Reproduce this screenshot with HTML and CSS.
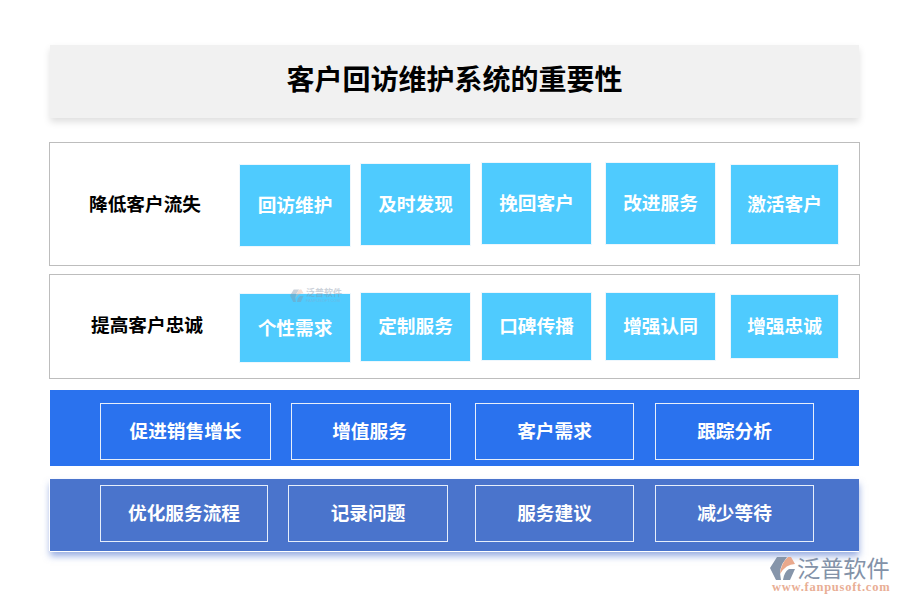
FILE: index.html
```html
<!DOCTYPE html>
<html lang="zh">
<head>
<meta charset="utf-8">
<title>客户回访维护系统的重要性</title>
<link rel="stylesheet" href="styles.css">
</head>
<body>
<main class="page">
  <h1 class="title">客户回访维护系统的重要性</h1>
  <section class="row row-a">
    <div class="label">降低客户流失</div>
    <div class="tile">回访维护</div>
    <div class="tile">及时发现</div>
    <div class="tile">挽回客户</div>
    <div class="tile">改进服务</div>
    <div class="tile">激活客户</div>
  </section>
  <section class="row row-b">
    <div class="label">提高客户忠诚</div>
    <div class="tile">个性需求</div>
    <div class="tile">定制服务</div>
    <div class="tile">口碑传播</div>
    <div class="tile">增强认同</div>
    <div class="tile">增强忠诚</div>
  </section>
  <section class="band band-a">
    <div class="cell">促进销售增长</div>
    <div class="cell">增值服务</div>
    <div class="cell">客户需求</div>
    <div class="cell">跟踪分析</div>
  </section>
  <section class="band band-b">
    <div class="cell">优化服务流程</div>
    <div class="cell">记录问题</div>
    <div class="cell">服务建议</div>
    <div class="cell">减少等待</div>
  </section>
</main>

<div class="ghost-mark">
  <svg class="ghost-icon" viewBox="0 0 26 24" aria-hidden="true">
    <path d="M7 0 L0 11 L6 23 L11 23 Q8 11 15 3 L17 0 Z" fill="#8795a8"/>
    <path d="M10 17 Q11 6 18 0 L21 0 L25 7 Q16 7 10 17 Z" fill="#e8b49c"/>
    <path d="M13 23 L20 23 L25 12 L19 12 Q14 15 13 23 Z" fill="#8795a8"/>
  </svg>
  <div class="ghost-text">
    <span class="ghost-cn">泛普软件</span>
    <span class="ghost-en">FANPUSOFT.COM</span>
  </div>
</div>

<div class="brand">
  <svg class="brand-icon" viewBox="0 0 26 24" aria-hidden="true">
    <path d="M7 0 L0 11 L6 23 L11 23 Q8 11 15 3 L17 0 Z" fill="#8695aa"/>
    <path d="M10 17 Q11 6 18 0 L21 0 L25 7 Q16 7 10 17 Z" fill="#e9a88c"/>
    <path d="M13 23 L20 23 L25 12 L19 12 Q14 15 13 23 Z" fill="#8695aa"/>
  </svg>
  <div class="brand-cn">泛普软件</div>
  <div class="brand-en">www.fanpusoft.com</div>
</div>
</body>
</html>
```

FILE: styles.css
```css
* { box-sizing: border-box; }

html, body {
  margin: 0;
  height: 600px;
  overflow: hidden;
  background: #fff;
}

body {
  position: relative;
  font-family: "Noto Sans CJK SC", "Liberation Sans", sans-serif;
}

.page {
  display: flex;
  flex-direction: column;
  padding: 45px 41px 0 50px;
}

.title {
  margin: 0;
  height: 73px;
  display: flex;
  align-items: center;
  justify-content: center;
  padding-bottom: 7px;
  background: #f1f1f1;
  box-shadow: 0 4px 7px rgba(0, 0, 0, 0.13);
  color: #000;
  font-size: 28px;
  font-weight: 700;
}

/* Outlined rows with sky-blue tiles */
.row {
  display: flex;
  align-items: flex-start;
  margin: 0 -1px;
  border: 1px solid #bdbdbd;
  background: #fff;
}

.row-a { height: 124px; margin-top: 24px; padding-top: 19px; }
.row-b { height: 105px; margin-top: 8px; padding-top: 17px; }

.label {
  width: 189px;
  align-self: center;
  text-align: center;
  color: #000;
  font-size: 18.67px;
  font-weight: 700;
  line-height: 26px;
}

.row-a .label { margin-top: -22px; padding-left: 1px; }
.row-b .label { margin-top: -23px; padding-left: 5px; }

.tile {
  display: flex;
  align-items: center;
  justify-content: center;
  width: 111px;
  border: 1px solid #eef7fd;
  background: #4fcbfe;
  color: #fff;
  font-size: 18.67px;
  font-weight: 700;
  padding-bottom: 4px;
}

.tile:nth-child(2) { width: 112px; }
.tile:nth-child(3) { margin-left: 9px; }
.tile:nth-child(4) { margin-left: 10px; }
.tile:nth-child(5) { margin-left: 13px; }
.tile:nth-child(6) { margin-left: 14px; width: 109px; }

.row-a .tile { height: 83px; }
.row-a .tile:nth-child(2) { margin-top: 2px; }
.row-a .tile:nth-child(3) { margin-top: 1px; }
.row-a .tile:nth-child(6) { margin-top: 2px; height: 81px; }

.row-b .tile { height: 69px; }
.row-b .tile:nth-child(2) { margin-top: 1px; height: 70px; }
.row-b .tile:nth-child(3) { height: 70px; padding-bottom: 6px; }
.row-b .tile:nth-child(6) { margin-top: 2px; height: 65px; }

/* Solid blue bands with outlined cells */
.band {
  display: flex;
  align-items: flex-start;
  padding-left: 50px;
}

.band-a {
  height: 76px;
  margin-top: 11px;
  padding-top: 13px;
  background: #2a72ee;
}

.band-b {
  height: 72px;
  margin-top: 13px;
  padding-top: 6px;
  background: #4a74cc;
  box-shadow: -1px 0 0 #fff, 0 1px 0 #fff, 0 5px 7px rgba(64, 104, 200, 0.55);
}

.cell {
  display: flex;
  align-items: center;
  justify-content: center;
  width: 159px;
  height: 57px;
  border: 1px solid #e6eefb;
  color: #fff;
  font-size: 18.67px;
  font-weight: 700;
  padding-bottom: 5px;
}

.band-a .cell:nth-child(1) { width: 171px; }
.band-a .cell:nth-child(2) { margin-left: 20px; width: 160px; padding-right: 3px; }
.band-a .cell:nth-child(3) { margin-left: 24px; }
.band-a .cell:nth-child(4) { margin-left: 21px; }

.band-b .cell:nth-child(1) { width: 168px; }
.band-b .cell:nth-child(2) { margin-left: 20px; width: 160px; }
.band-b .cell:nth-child(3) { margin-left: 27px; }
.band-b .cell:nth-child(4) { margin-left: 21px; }

/* Faint watermark lying over the second row */
.ghost-mark {
  position: absolute;
  left: 290px;
  top: 288px;
  display: flex;
  align-items: center;
  gap: 2px;
  opacity: 0.42;
  pointer-events: none;
}

.ghost-icon { width: 14px; height: 14px; }

.ghost-text {
  display: flex;
  flex-direction: column;
  gap: 1px;
}

.ghost-cn {
  color: #8795a8;
  font-size: 9px;
  font-weight: 700;
  line-height: 9px;
}

.ghost-en {
  color: #8fa4c4;
  font-family: "Liberation Sans", sans-serif;
  font-size: 4px;
  line-height: 5px;
}

/* Brand logo, bottom right */
.brand {
  position: absolute;
  left: 770px;
  top: 553px;
  width: 125px;
  height: 42px;
}

.brand-icon {
  position: absolute;
  left: 0;
  top: 4px;
  width: 26px;
  height: 24px;
}

.brand-cn {
  position: absolute;
  left: 27px;
  top: 0;
  color: #8392a8;
  font-size: 23.2px;
  font-weight: 400;
  line-height: 29px;
  white-space: nowrap;
}

.brand-en {
  position: absolute;
  left: 2px;
  top: 27px;
  color: #e9ae95;
  font-family: "Liberation Serif", serif;
  font-size: 12.5px;
  font-weight: 700;
  letter-spacing: 0.75px;
  line-height: 14px;
  white-space: nowrap;
}
```
